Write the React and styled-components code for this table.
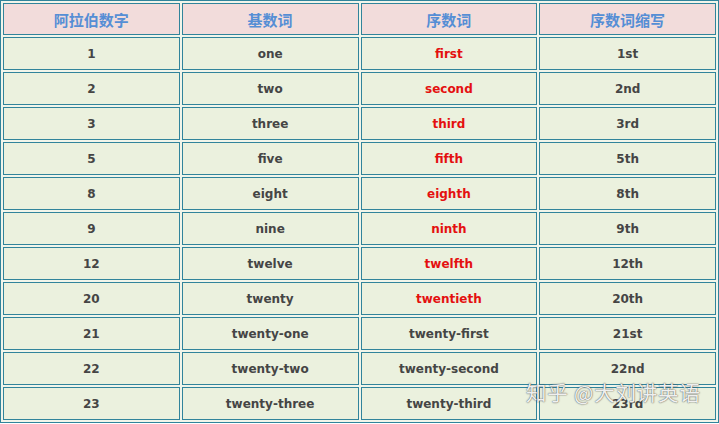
import React from "react";
import styled, { createGlobalStyle } from "styled-components";

const Global = createGlobalStyle`
  html, body { margin: 0; padding: 0; background: #ffffff; }
  body { width: 719px; height: 424px; overflow: hidden; }
`;

const Frame = styled.div`
  position: relative;
  width: 719px;
  height: 424px;
`;

const Table = styled.table`
  width: 719px;
  table-layout: fixed;
  border-collapse: separate;
  border-spacing: 2px;
  border: 1px solid #31849b;
  background: #f1f5ea;
  font-family: "DejaVu Sans", Verdana, sans-serif;
`;

const HeadCell = styled.th`
  height: 32px;
  box-sizing: border-box;
  padding: 0;
  border: 1px solid #31849b;
  background: #f2dcdb;
  color: #558ed5;
  font-family: "Noto Sans CJK SC", "Noto Sans", sans-serif;
  font-weight: 700;
  font-size: 15px;
  text-align: center;
  vertical-align: middle;
`;

const Cell = styled.td`
  height: 33px;
  box-sizing: border-box;
  padding: 0;
  border: 1px solid #31849b;
  background: #ebf1de;
  color: ${(p) => (p.$red ? "#e41010" : "#454545")};
  font-weight: 700;
  font-size: 12px;
  text-align: center;
  vertical-align: middle;
`;

const Watermark = styled.div`
  position: absolute;
  left: 526px;
  top: 377px;
  font-family: "Noto Sans CJK SC", sans-serif;
  font-size: 20.5px;
  font-weight: 400;
  color: rgba(255, 255, 255, 0.92);
  text-shadow: 0 0 1.5px rgba(60, 60, 60, 0.8), 0 0 1px rgba(60, 60, 60, 0.6);
  white-space: pre;
  letter-spacing: 0.8px;
  pointer-events: none;
`;

const rows = [
  ["1", "one", "first", "1st", true],
  ["2", "two", "second", "2nd", true],
  ["3", "three", "third", "3rd", true],
  ["5", "five", "fifth", "5th", true],
  ["8", "eight", "eighth", "8th", true],
  ["9", "nine", "ninth", "9th", true],
  ["12", "twelve", "twelfth", "12th", true],
  ["20", "twenty", "twentieth", "20th", true],
  ["21", "twenty-one", "twenty-first", "21st", false],
  ["22", "twenty-two", "twenty-second", "22nd", false],
  ["23", "twenty-three", "twenty-third", "23rd", false],
];

export default function App() {
  return (
    <Frame>
      <Global />
      <Table>
        <thead>
          <tr>
            <HeadCell>阿拉伯数字</HeadCell>
            <HeadCell>基数词</HeadCell>
            <HeadCell>序数词</HeadCell>
            <HeadCell>序数词缩写</HeadCell>
          </tr>
        </thead>
        <tbody>
          {rows.map(([n, c, o, a, red]) => (
            <tr key={n}>
              <Cell>{n}</Cell>
              <Cell>{c}</Cell>
              <Cell $red={red}>{o}</Cell>
              <Cell>{a}</Cell>
            </tr>
          ))}
        </tbody>
      </Table>
      <Watermark>知乎 @大刘讲英语</Watermark>
    </Frame>
  );
}
